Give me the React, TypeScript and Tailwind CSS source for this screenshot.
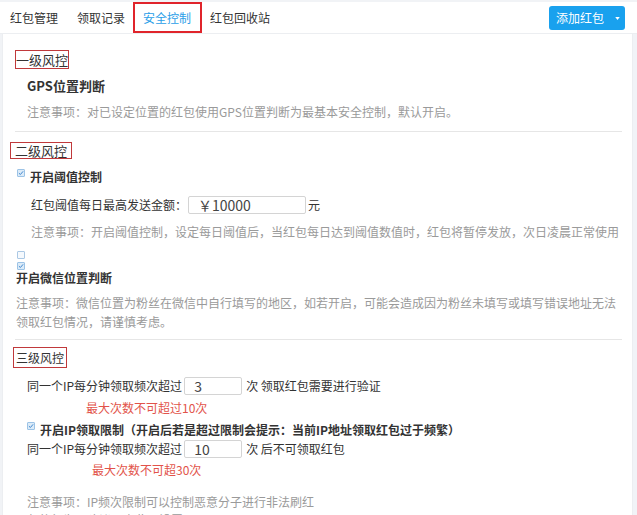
import * as React from "react"

function Check({ checked = false, className = "" }: { checked?: boolean; className?: string }) {
  return (
    <span
      className={
        "inline-flex h-[8px] w-[8px] shrink-0 items-center justify-center rounded-[1px] border " +
        (checked ? "border-[#9cc3e6] bg-[#dcebf8] " : "border-[#abc8e4] bg-[#f5f9fd] ") +
        className
      }
    >
      {checked && (
        <svg viewBox="0 0 8 8" className="h-[6px] w-[6px]">
          <path d="M1.2 4.2 L3.2 6 L6.8 1.8" fill="none" stroke="#3f86cf" strokeWidth="1.3" />
        </svg>
      )}
    </span>
  )
}

function Field({ value, className = "" }: { value: string; className?: string }) {
  return (
    <div
      className={
        "flex h-[18px] items-center rounded-[2px] border border-[#d4d4d4] bg-white pl-[9px] text-[14px] leading-none text-[#444] " +
        className
      }
    >
      {value}
    </div>
  )
}

export default function App() {
  return (
    <div className="h-[515px] w-[637px] overflow-hidden bg-[#f1f3f6] pt-[2px] font-['Noto_Sans_CJK_SC','Noto_Sans',sans-serif] text-[12px] text-[#333]">
      {/* tabs */}
      <div className="flex h-[32px] items-stretch border-b border-[#eceef1] bg-white">
        <div className="ml-[10px] flex items-center">红包管理</div>
        <div className="ml-[19px] flex items-center">领取记录</div>
        <div className="ml-[8px] flex h-[31px] items-center border-2 border-[#e0242b] pl-[8px] pr-[9px] text-[#2a9ee8]">
          安全控制
        </div>
        <div className="ml-[8px] flex items-center">红包回收站</div>
        <div className="ml-auto mr-[12px] mt-[4px] flex h-[24px] items-center rounded-[3px] bg-[#19a1ee] text-white">
          <span className="pl-[7px] text-[12px]">添加红包</span>
          <span className="flex w-[21px] justify-end pr-[5px]">
            <svg viewBox="0 0 6 4" className="h-[3px] w-[5px]">
              <path d="M0 0 H6 L3 4 Z" fill="#ffffff" />
            </svg>
          </span>
        </div>
      </div>

      {/* body */}
      <div className="flex h-full">
        <div className="ml-[2px] h-full w-[631px] border-x border-[#eceef1] bg-white pl-[12px] pr-[10px]">
          {/* level 1 */}
          <div className="mt-[16px] flex">
            <div className="flex h-[19px] items-center border border-[#c0393b] text-[13px] leading-none">
              一级风控
            </div>
          </div>
          <div className="ml-[12px] mt-[8px] text-[13px] font-bold leading-[18px]">GPS位置判断</div>
          <div className="ml-[12px] mt-[8px] leading-[18px] text-[#9a9a9a]">
            注意事项：对已设定位置的红包使用GPS位置判断为最基本安全控制，默认开启。
          </div>
          <div className="mt-[10px] border-t border-[#e6e6e6]" />

          {/* level 2 */}
          <div className="ml-[-5px] mt-[10px] flex">
            <div className="flex h-[17px] items-center border border-[#c0393b] px-[4px] text-[13px] leading-none">
              二级风控
            </div>
          </div>
          <div className="ml-[2px] mt-[9px] flex h-[18px] items-start">
            <Check checked className="mt-[1px]" />
            <span className="ml-[5px] font-bold leading-[18px]">开启阈值控制</span>
          </div>
          <div className="ml-[16px] mt-[9px] flex h-[20px] items-center whitespace-nowrap">
            <span>红包阈值每日最高发送金额：</span>
            <Field value="￥10000" className="ml-[1px] w-[118px]" />
            <span className="ml-[2px]">元</span>
          </div>
          <div className="ml-[16px] mt-[8px] whitespace-nowrap leading-[18px] text-[#9a9a9a]">
            注意事项：开启阈值控制，设定每日阈值后，当红包每日达到阈值数值时，红包将暂停发放，次日凌晨正常使用
          </div>
          <div className="ml-[2px] mt-[10px] flex">
            <Check />
          </div>
          <div className="ml-[2px] mt-[3px] flex">
            <Check checked />
          </div>
          <div className="ml-[1px] mt-[0px] font-bold leading-[16px]">开启微信位置判断</div>
          <div className="ml-[1px] mt-[7px] whitespace-nowrap leading-[19px] text-[#9a9a9a]">
            注意事项：微信位置为粉丝在微信中自行填写的地区，如若开启，可能会造成因为粉丝未填写或填写错误地址无法
            <br />
            领取红包情况，请谨慎考虑。
          </div>
          <div className="mt-[8px] border-t border-[#e6e6e6]" />

          {/* level 3 */}
          <div className="ml-[-2px] mt-[7px] flex">
            <div className="flex h-[21px] items-center border border-[#c0393b] px-[2px] text-[12px] leading-none">
              三级风控
            </div>
          </div>
          <div className="ml-[12px] mt-[8px] flex h-[19px] items-center whitespace-nowrap">
            <span>同一个IP每分钟领取频次超过</span>
            <Field value="3" className="ml-[2px] w-[58px]" />
            <span className="ml-[4px]">次 领取红包需要进行验证</span>
          </div>
          <div className="ml-[71px] mt-[4px] leading-[18px] text-[#e2534a]">最大次数不可超过10次</div>
          <div className="ml-[12px] mt-[4px] flex h-[18px] items-start whitespace-nowrap">
            <Check checked className="mt-[1px]" />
            <span className="ml-[5px] font-bold leading-[18px]">
              开启IP领取限制（开启后若是超过限制会提示：当前IP地址领取红包过于频繁）
            </span>
          </div>
          <div className="ml-[12px] flex h-[19px] items-center whitespace-nowrap">
            <span>同一个IP每分钟领取频次超过</span>
            <Field value="10" className="ml-[2px] w-[58px]" />
            <span className="ml-[4px]">次 后不可领取红包</span>
          </div>
          <div className="ml-[77px] mt-[3px] leading-[18px] text-[#e2534a]">最大次数不可超30次</div>
          <div className="ml-[12px] mt-[14px] leading-[18px] text-[#9a9a9a]">
            注意事项：IP频次限制可以控制恶意分子进行非法刷红
            <br />
            包的行为，建议开启此项设置。
          </div>
        </div>
        <div className="h-full flex-1 bg-[#f1f3f7]" />
      </div>
    </div>
  )
}
